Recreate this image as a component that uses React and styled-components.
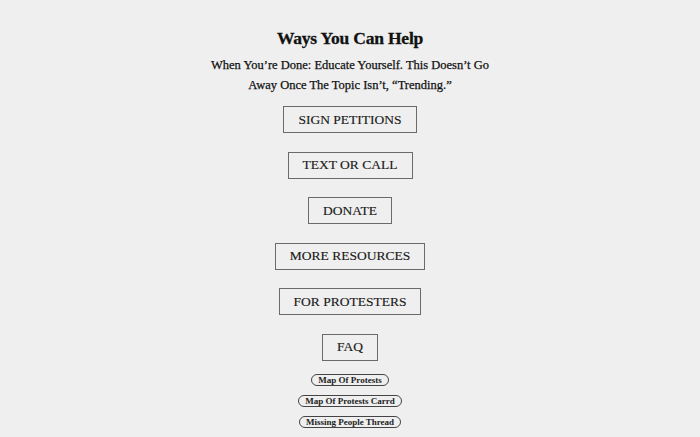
import styled, { createGlobalStyle } from 'styled-components';

const GlobalStyle = createGlobalStyle`
  html, body {
    margin: 0;
    padding: 0;
    background: #efefef;
  }
  body {
    font-family: 'Liberation Serif', 'DejaVu Serif', serif;
    color: #111111;
  }
`;

const links = ['Sign Petitions', 'Text Or Call', 'Donate', 'More Resources', 'For Protesters', 'FAQ'];
const pills = ['Map Of Protests', 'Map Of Protests Carrd', 'Missing People Thread'];

export default function App() {
  return (
    <>
      <GlobalStyle />
      <Page>
        <Title>Ways You Can Help</Title>
        <Subtitle>
          When You’re Done: Educate Yourself. This Doesn’t Go
          <br />
          Away Once The Topic Isn’t, “Trending.”
        </Subtitle>
        <LinkList>
          {links.map((label) => (
            <LinkButton key={label}>{label}</LinkButton>
          ))}
        </LinkList>
        <PillList>
          {pills.map((label) => (
            <Pill key={label}>{label}</Pill>
          ))}
        </PillList>
      </Page>
    </>
  );
}

const Page = styled.div`
  display: flex;
  flex-direction: column;
  align-items: center;
  padding-top: 28px;
`;

const Title = styled.h1`
  margin: 0;
  font-size: 17.5px;
  font-weight: 700;
  line-height: 21px;
  letter-spacing: -0.2px;
  -webkit-text-stroke: 0.3px #111111;
`;

const Subtitle = styled.p`
  margin: 6px 0 0;
  font-size: 12.5px;
  line-height: 20px;
  text-align: center;
  -webkit-text-stroke: 0.25px #111111;
`;

const LinkList = styled.div`
  display: flex;
  flex-direction: column;
  align-items: center;
  gap: 18.6px;
  margin-top: 11px;
`;

const LinkButton = styled.div`
  box-sizing: border-box;
  height: 27px;
  padding: 0 14px;
  display: flex;
  align-items: center;
  border: 1px solid #6a6a6a;
  font-size: 13.5px;
  text-transform: uppercase;
  color: #1a1a1a;
  -webkit-text-stroke: 0.15px #1a1a1a;
`;

const PillList = styled.div`
  display: flex;
  flex-direction: column;
  align-items: center;
  gap: 9px;
  margin-top: 13px;
`;

const Pill = styled.div`
  box-sizing: border-box;
  height: 12px;
  padding: 0 6px;
  display: flex;
  align-items: center;
  border: 1px solid #444444;
  border-radius: 7px;
  font-size: 9px;
  font-weight: 700;
  color: #222222;
`;
